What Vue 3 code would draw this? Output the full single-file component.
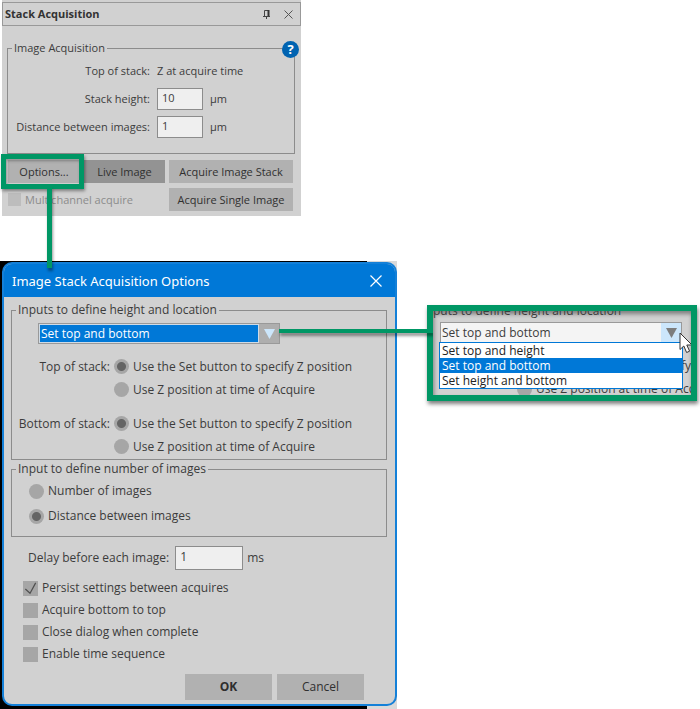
<script setup>
import { ref } from "vue";

const stackHeight = ref("10");
const distance = ref("1");
const delay = ref("1");
const multichannel = ref(false);

const choices = ["Set top and height", "Set top and bottom", "Set height and bottom"];
const heightMode = ref("Set top and bottom");

const positionRows = ref([
  { name: "top", label: "Top of stack:", value: "button" },
  { name: "bottom", label: "Bottom of stack:", value: "button" },
]);
const countMode = ref("distance");

const checks = ref([
  { id: "persist", text: "Persist settings between acquires", on: true },
  { id: "upward", text: "Acquire bottom to top", on: false },
  { id: "close", text: "Close dialog when complete", on: false },
  { id: "sequence", text: "Enable time sequence", on: false },
]);
</script>

<template>
  <main class="page">
    <div class="panel-wrap">
      <section class="panel">
        <header class="panel-title">
          <h2>Stack Acquisition</h2>
          <button class="icon-btn" aria-label="Pin">
            <svg width="9" height="10" viewBox="0 0 9 10">
              <path d="M2.5 7V1.5H6.5M1 7.5H8M4.5 7.5V10" fill="none" stroke="#444" />
              <path d="M6.5 1V7" stroke="#333" stroke-width="2" />
            </svg>
          </button>
          <button class="icon-btn" aria-label="Close">
            <svg width="9" height="9" viewBox="0 0 9 9">
              <path d="M0.5 0.5L8.5 8.5M8.5 0.5L0.5 8.5" stroke="#555" />
            </svg>
          </button>
        </header>

        <fieldset class="group acquisition">
          <legend>Image Acquisition</legend>
          <button class="help" aria-label="Help">?</button>
          <div class="field">
            <span class="name">Top of stack:</span>
            <span>Z at acquire time</span>
          </div>
          <div class="field">
            <label class="name" for="stack-height">Stack height:</label>
            <input id="stack-height" v-model="stackHeight" type="text" />
            <span>µm</span>
          </div>
          <div class="field">
            <label class="name" for="distance">Distance between images:</label>
            <input id="distance" v-model="distance" type="text" />
            <span>µm</span>
          </div>
        </fieldset>

        <div class="actions">
          <div class="options">
            <button class="btn">Options...</button>
            <span class="highlight"></span>
            <span class="line-down"></span>
          </div>
          <button class="btn dark">Live Image</button>
          <button class="btn">Acquire Image Stack</button>
          <label class="multi">
            <input v-model="multichannel" type="checkbox" disabled />
            Multichannel acquire
          </label>
          <button class="btn">Acquire Single Image</button>
        </div>
      </section>
    </div>

    <div class="lower">
      <div class="stage">
        <section class="dialog">
          <header class="dialog-title">
            <h2>Image Stack Acquisition Options</h2>
            <button class="icon-btn" aria-label="Close">
              <svg width="12" height="12" viewBox="0 0 12 12">
                <path d="M0.5 0.5L11.5 11.5M11.5 0.5L0.5 11.5" stroke="#fff" stroke-width="1.2" />
              </svg>
            </button>
          </header>

          <div class="dialog-body">
            <fieldset class="group location">
              <legend>Inputs to define height and location</legend>
              <div class="combo selected">
                <select v-model="heightMode" aria-label="Height and location">
                  <option v-for="c in choices" :key="c">{{ c }}</option>
                </select>
                <span class="arrow">
                  <svg width="11" height="10" viewBox="0 0 11 10"><path d="M0 0H11L5.5 10Z" fill="#cce6fb" /></svg>
                </span>
              </div>
              <div v-for="row in positionRows" :key="row.name" class="position" role="radiogroup" :aria-label="row.label">
                <span class="name">{{ row.label }}</span>
                <label class="choice">
                  <input v-model="row.value" type="radio" :name="row.name" value="button" />
                  Use the Set button to specify Z position
                </label>
                <label class="choice second">
                  <input v-model="row.value" type="radio" :name="row.name" value="acquire" />
                  Use Z position at time of Acquire
                </label>
              </div>
            </fieldset>

            <fieldset class="group count">
              <legend>Input to define number of images</legend>
              <label class="choice">
                <input v-model="countMode" type="radio" name="count" value="number" />
                Number of images
              </label>
              <label class="choice">
                <input v-model="countMode" type="radio" name="count" value="distance" />
                Distance between images
              </label>
            </fieldset>

            <div class="delay">
              <label for="delay">Delay before each image:</label>
              <input id="delay" v-model="delay" type="text" />
              <span>ms</span>
            </div>

            <div class="checks">
              <label v-for="c in checks" :key="c.id" class="choice">
                <span class="box">
                  <input v-model="c.on" type="checkbox" />
                  <svg v-if="c.on" width="15" height="15" viewBox="0 0 16 16">
                    <path d="M2.5 8.5L7.5 13L13.5 2" fill="none" stroke="#505050" stroke-width="1.3" />
                  </svg>
                </span>
                {{ c.text }}
              </label>
            </div>

            <footer class="dialog-footer">
              <button class="btn strong">OK</button>
              <button class="btn">Cancel</button>
            </footer>
          </div>
        </section>
      </div>

      <aside class="callout">
        <span class="line-across"></span>
        <div class="callout-view">
          <p class="cut-top">puts to define height and location</p>
          <div class="combo open">
            <select v-model="heightMode" aria-label="Height and location, opened">
              <option v-for="c in choices" :key="c">{{ c }}</option>
            </select>
            <span class="arrow">
              <svg width="11" height="10" viewBox="0 0 11 10"><path d="M0 0H11L5.5 10Z" fill="#7d7d7d" /></svg>
            </span>
            <ul class="list" role="listbox">
              <li
                v-for="c in choices"
                :key="c"
                role="option"
                :aria-selected="c === heightMode"
                :class="{ active: c === heightMode }"
                @click="heightMode = c"
              >{{ c }}</li>
            </ul>
            <svg class="cursor" width="14" height="22" viewBox="0 0 14 22">
              <path d="M1 1V17.5L4.8 14L7.6 20.5L10.6 19.2L7.8 13H13Z" fill="#fff" stroke="#333" />
            </svg>
          </div>
          <p class="cut-side">fy</p>
          <p class="cut-bottom"><i class="dot"></i>Use Z position at time of Acquire</p>
        </div>
      </aside>
    </div>
  </main>
</template>

<style>
body {
  background: #fff;
}
</style>

<style scoped>
.page {
  font-family: "Open Sans", "Noto Sans", sans-serif;
  font-size: 11px;
  line-height: 18px;
  color: #3c3c3c;
}
.page * {
  box-sizing: border-box;
}
h2,
p,
ul {
  margin: 0;
  padding: 0;
}
button,
input,
select {
  font: inherit;
  color: inherit;
  margin: 0;
  border-radius: 0;
}
.icon-btn {
  display: flex;
  padding: 0;
  border: none;
  background: transparent;
}
.group {
  position: relative;
  min-width: 0;
  margin: 0;
  border: 1px solid #8c8c8c;
}
.group legend {
  margin-left: 4px;
  padding: 0 2px;
}
.btn {
  width: 100%;
  padding: 0;
  border: none;
  background: #b1b1b1;
  color: #303030;
  white-space: nowrap;
}
.btn.dark {
  background: #939393;
}
input[type="text"] {
  border: 1px solid #8c8c8c;
  background: #efefef;
}

/* Stack Acquisition panel */
.panel-wrap {
  width: 43%;
  min-width: 296px;
  padding-left: 2px;
}
.panel {
  padding: 2px 6px 5px 5px;
  background: #d1d1d1;
}
.panel-title {
  display: flex;
  align-items: center;
  gap: 13px;
  height: 24px;
  margin: 0 -6px 13px -5px;
  padding: 0 7px 0 2px;
  border: 1px solid #999;
}
.panel-title h2 {
  flex: 1;
  font-size: 11px;
  color: #333;
}
.acquisition {
  padding: 0 0 12px;
}
.help {
  position: absolute;
  top: -16px;
  right: -5px;
  width: 17px;
  height: 17px;
  padding: 0;
  border: none;
  border-radius: 50%;
  background: #0063b1;
  color: #fff;
  font-size: 13px;
  font-weight: bold;
  line-height: 17px;
}
.field {
  display: flex;
  align-items: center;
  gap: 7px;
  height: 28px;
}
.field .name {
  width: 142px;
  text-align: right;
  white-space: nowrap;
}
.field input {
  width: 46px;
  height: 22px;
  padding: 0 4px 3px;
}
.actions {
  display: grid;
  grid-template-columns: 72fr 81fr 124fr;
  grid-auto-rows: 23px;
  gap: 5px 4px;
  margin-top: 6px;
  padding: 0 2px 0 1px;
}
.options {
  position: relative;
}
.options .btn {
  height: 100%;
}
.highlight {
  position: absolute;
  inset: -6px -4px -6px -7px;
  border: 5px solid #009765;
  box-shadow: 1px 2px 3px rgba(0, 0, 0, 0.4), inset 1px 2px 3px rgba(0, 0, 0, 0.3);
}
.line-down {
  position: absolute;
  z-index: 2;
  top: 27px;
  left: 39px;
  width: 5px;
  height: 81px;
  background: #009765;
  box-shadow: 1px 3px 3px rgba(0, 0, 0, 0.4);
}
.multi {
  display: flex;
  grid-column: span 2;
  align-items: center;
  gap: 4px;
  color: #8c8c8c;
}
.multi input {
  appearance: none;
  width: 13px;
  height: 13px;
  background: #bdbdbd;
}

/* Options dialog */
.lower {
  display: flex;
  align-items: flex-start;
  margin-top: 45px;
}
.stage {
  width: 57%;
  min-width: 380px;
  padding: 1px 2px 3px;
  background: linear-gradient(to right, #000 92%, #d9d9d9 92%, #d9d9d9 calc(100% - 2px), #fff calc(100% - 2px));
}
.dialog {
  overflow: hidden;
  border: 2px solid #1480d8;
  border-radius: 10px;
  background: #d1d1d1;
  font-size: 12px;
}
.dialog-title {
  display: flex;
  align-items: center;
  justify-content: space-between;
  height: 33px;
  padding: 0 13px 0 8px;
  background: #0078d7;
  color: #fff;
}
.dialog-title h2 {
  font-family: "Noto Sans", "Open Sans", sans-serif;
  font-size: 13px;
  font-weight: normal;
}
.dialog-body {
  padding: 4px 8px 4px 7px;
}
.location {
  padding: 4px 0 1px;
}
.combo {
  position: relative;
  display: flex;
  height: 21px;
  border: 1px solid #999;
}
.combo select {
  flex: 1;
  min-width: 0;
  appearance: none;
  padding: 0 1px;
  border: none;
  line-height: 18px;
}
.combo .arrow {
  display: flex;
  align-items: center;
  justify-content: center;
  width: 20px;
  pointer-events: none;
}
.combo.selected {
  width: 242px;
  max-width: 90%;
  margin-left: 26px;
}
.selected select {
  border: 1px solid #cfdbe6;
  background: #0078d7;
  color: #fff;
}
.selected .arrow {
  background: #aeaeae;
}
.position {
  display: grid;
  grid-template-columns: 98px 1fr;
  grid-auto-rows: 23px;
  align-items: center;
  column-gap: 4px;
  margin-top: 11px;
}
.position .name {
  text-align: right;
  white-space: nowrap;
}
.choice {
  display: flex;
  align-items: center;
  gap: 4px;
  white-space: nowrap;
}
.second {
  grid-column: 2;
}
.choice input {
  appearance: none;
  flex: none;
  width: 15px;
  height: 15px;
  background: #a6a6a6;
}
.choice input[type="radio"] {
  border-radius: 50%;
}
.choice input[type="radio"]:checked {
  background: radial-gradient(circle, #646464 4px, #a6a6a6 5px);
}
.count {
  padding: 1px 0 7px;
}
.count .choice {
  height: 24px;
  margin: 0 0 1px 17px;
}
.delay {
  display: flex;
  align-items: center;
  gap: 4px;
  margin: 9px 0 7px 17px;
}
.delay input {
  width: 68px;
  height: 24px;
  margin-left: 2px;
  padding: 0 4px 3px;
}
.checks {
  padding-left: 12px;
}
.checks .choice {
  height: 22px;
}
.box {
  position: relative;
  display: flex;
}
.box svg {
  position: absolute;
  top: 0;
  left: 0;
}
.dialog-footer {
  display: flex;
  justify-content: flex-end;
  gap: 5px;
  margin: 9px 23px 0 0;
}
.dialog-footer .btn {
  width: 87px;
  height: 26px;
}
.btn.strong {
  font-weight: bold;
  color: #2e2e2e;
}

/* Enlarged drop-down */
.callout {
  position: relative;
  flex: 1;
  min-width: 0;
  margin: 44px 3px 0 28px;
  border: 6px solid #009765;
  box-shadow: 1px 3px 4px rgba(0, 0, 0, 0.5);
  font-size: 12px;
}
.callout-view {
  position: relative;
  display: flow-root;
  overflow: hidden;
  height: 84px;
  background: #d1d1d1;
  box-shadow: inset 1px 3px 4px rgba(0, 0, 0, 0.4);
  white-space: nowrap;
}
.line-across {
  position: absolute;
  right: 100%;
  top: 18px;
  width: 154px;
  height: 4px;
  background: #009765;
  box-shadow: 1px 3px 3px rgba(0, 0, 0, 0.4);
}
.cut-top {
  margin-top: -9px;
}
.combo.open {
  z-index: 1;
  margin: 2px 9px 0 7px;
}
.open select {
  background: #f4f4f4;
}
.open .arrow {
  background: #cce6fb;
}
.list {
  position: absolute;
  top: 100%;
  left: -2px;
  right: -2px;
  border: 1px solid #0078d7;
  background: #fff;
  color: #222;
  line-height: 15px;
  list-style: none;
}
.list li {
  padding-left: 2px;
}
.list .active {
  background: #0078d7;
  color: #fff;
}
.cursor {
  position: absolute;
  top: 9px;
  right: -12px;
}
.cut-side {
  margin-top: 14px;
  text-align: right;
}
.cut-bottom {
  display: flex;
  align-items: center;
  gap: 4px;
  margin-top: 5px;
  padding-left: 84px;
}
.dot {
  flex: none;
  width: 15px;
  height: 15px;
  border-radius: 50%;
  background: #a6a6a6;
}
</style>
